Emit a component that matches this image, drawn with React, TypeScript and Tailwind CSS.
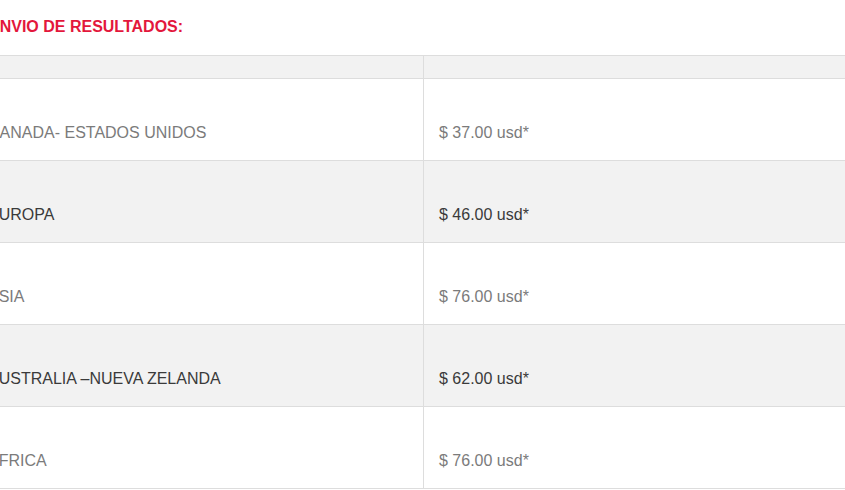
import React from "react";

const rows = [
  { region: "CANADA- ESTADOS UNIDOS", price: "$ 37.00 usd*" },
  { region: "EUROPA", price: "$ 46.00 usd*" },
  { region: "ASIA", price: "$ 76.00 usd*" },
  { region: "AUSTRALIA \u2013NUEVA ZELANDA", price: "$ 62.00 usd*" },
  { region: "AFRICA", price: "$ 76.00 usd*" },
];

export default function App() {
  return (
    <div
      className="w-[845px] h-[490px] overflow-hidden bg-white"
      style={{ fontFamily: '"Liberation Sans", Arial, sans-serif' }}
    >
      <div className="ml-[-28px] w-[1200px] pt-[15px]">
        <div className="pl-[17px] text-[16px] leading-[24px] font-bold text-[#e3173c]">
          ENVIO DE RESULTADOS:
        </div>
        <div className="mt-4 border-t border-[#dddddd]">
          <div className="flex h-[23px] bg-[#f2f2f2] border-b border-[#dddddd]">
            <div className="w-[452px] border-r border-[#dddddd]" />
            <div className="flex-1" />
          </div>
          {rows.map((r, i) => {
            const gray = i % 2 === 1;
            return (
              <div
                key={i}
                className={`flex h-[82px] border-b border-[#dddddd] text-[16px] leading-[24px] ${
                  gray ? "bg-[#f2f2f2] text-[#3a3a3a]" : "bg-white text-[#7b7b7b]"
                }`}
              >
                <div className="w-[452px] border-r border-[#dddddd] pl-4 pb-[15px] flex items-end">
                  {r.region}
                </div>
                <div className="flex-1 pl-[15px] pb-[15px] flex items-end">{r.price}</div>
              </div>
            );
          })}
        </div>
      </div>
    </div>
  );
}
